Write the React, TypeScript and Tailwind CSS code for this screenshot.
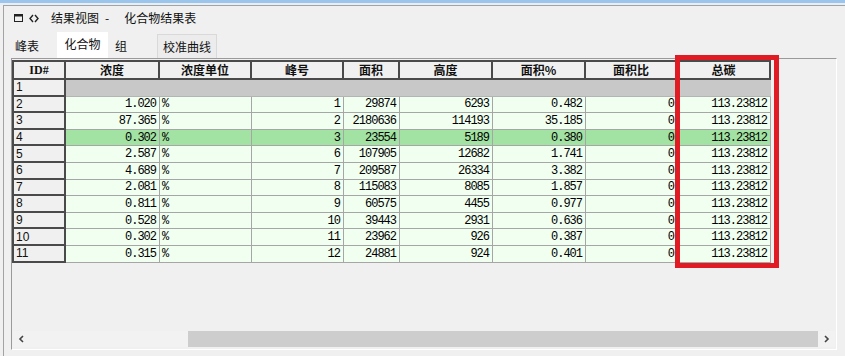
import React from 'react'

interface Column {
  label: string
  w: number
  align: 'left' | 'right' | 'center'
}

const columns: Column[] = [
  { label: 'ID#', w: 52, align: 'left' },
  { label: '浓度', w: 94, align: 'right' },
  { label: '浓度单位', w: 92, align: 'left' },
  { label: '峰号', w: 92, align: 'right' },
  { label: '面积', w: 56, align: 'right' },
  { label: '高度', w: 93, align: 'right' },
  { label: '面积%', w: 93, align: 'right' },
  { label: '面积比', w: 92, align: 'right' },
  { label: '总碳', w: 93, align: 'right' },
]

// id, 浓度, 峰号, 面积, 高度, 面积%
const rows: [string, string, string, string, string, string][] = [
  ['2', '1.020', '1', '29874', '6293', '0.482'],
  ['3', '87.365', '2', '2180636', '114193', '35.185'],
  ['4', '0.302', '3', '23554', '5189', '0.380'],
  ['5', '2.587', '6', '107905', '12682', '1.741'],
  ['6', '4.689', '7', '209587', '26334', '3.382'],
  ['7', '2.081', '8', '115083', '8085', '1.857'],
  ['8', '0.811', '9', '60575', '4455', '0.977'],
  ['9', '0.528', '10', '39443', '2931', '0.636'],
  ['10', '0.302', '11', '23962', '926', '0.387'],
  ['11', '0.315', '12', '24881', '924', '0.401'],
]

const cjk = "font-['Noto_Sans_CJK_SC','Noto_Sans',sans-serif]"
const num = "font-['Liberation_Mono',monospace] text-[12px] tracking-[-1px] text-black"

const IdCell: React.FC<{ children: React.ReactNode }> = ({ children }) => (
  <div className="w-[52px] h-full shrink-0 bg-[#f0f0f0] border-r-2 border-b-2 border-[#4a4a4a] pl-[2px] flex items-center text-[12px] font-['Liberation_Sans',sans-serif] text-[#111]">
    {children}
  </div>
)

const App: React.FC = () => {
  return (
    <div className={`w-[845px] h-[356px] bg-[#f0f0f0] relative overflow-hidden ${cjk} text-[#111]`}>
      <div className="h-[3px] bg-[#9cc5ec]" />
      <div className="h-[2px] bg-[#e6eef6]" />

      <div className="ml-[3px] h-[351px] border-l border-t border-[#a3a3a3]">
        {/* Title */}
        <div className="h-[24px] pl-[10px] flex items-center text-[12px] leading-none">
          <svg width="9" height="8" viewBox="0 0 9 8" className="mr-[6px]">
            <rect x="0.5" y="0.5" width="8" height="7" fill="none" stroke="#222" strokeWidth="1" />
            <rect x="0" y="0" width="9" height="2.5" fill="#222" />
          </svg>
          <svg width="10" height="9" viewBox="0 0 10 9" className="mr-[12px]">
            <polyline points="4,1 1,4.5 4,8" fill="none" stroke="#222" strokeWidth="1.4" />
            <polyline points="6,1 9,4.5 6,8" fill="none" stroke="#222" strokeWidth="1.4" />
          </svg>
          <span>结果视图</span>
          <span className="ml-[6px]">-</span>
          <span className="ml-[15px]">化合物结果表</span>
        </div>

        {/* Tabs */}
        <div className="h-[28px] pl-[6px] flex items-end text-[12px]">
          <div className="w-[47px] h-[24px] flex items-center pl-[5px]">峰表</div>
          <div className="w-[51px] h-[26px] bg-white flex items-center justify-center pb-[2px]">化合物</div>
          <div className="w-[49px] h-[24px] flex items-center pl-[7px]">组</div>
          <div className="w-[60px] h-[24px] border border-b-0 border-[#d9d9d9] bg-[#ececec] flex items-center justify-center">
            校准曲线
          </div>
        </div>

        {/* Panel */}
        <div className="ml-[7px] w-[826px] h-[292px] border-l border-t border-[#9a9a9a] border-r border-b border-r-white border-b-white flex flex-col">
          <div className="self-start border-l-2 border-t-2 border-[#4a4a4a] mt-[1px]">
            {/* Header */}
            <div className="flex h-[18px]">
              {columns.map((c) => (
                <div
                  key={c.label}
                  style={{ width: c.w }}
                  className={`shrink-0 h-full bg-[#f0f0f0] border-r-2 border-b-2 border-[#4a4a4a] flex items-center justify-center font-bold text-[12px] ${
                    c.label === 'ID#' ? "font-['Liberation_Serif',serif] text-[11px]" : ''
                  }`}
                >
                  {c.label}
                </div>
              ))}
            </div>

            {/* Row 1 */}
            <div className="flex h-[16.6px]">
              <IdCell>1</IdCell>
              <div className="w-[705px] h-full bg-[#c8c8c8] border-b border-[#b4b4b4]" />
            </div>

            {rows.map((r) => {
              const hl = r[0] === '4'
              const bg = hl ? 'bg-[#a2e2a2]' : 'bg-[#f0fff0]'
              const cells = [r[1], '%', r[2], r[3], r[4], r[5], '0', '113.23812']
              return (
                <div key={r[0]} className="flex h-[16.6px]">
                  <IdCell>{r[0]}</IdCell>
                  {cells.map((v, i) => {
                    const c = columns[i + 1]
                    return (
                      <div
                        key={i}
                        style={{ width: c.w }}
                        className={`shrink-0 h-full ${bg} border-r border-b border-[#a6a6a6] flex items-center ${num} ${
                          c.align === 'left' ? 'justify-start pl-[2px]' : 'justify-end pr-[3px]'
                        }`}
                      >
                        {v}
                      </div>
                    )
                  })}
                </div>
              )
            })}
          </div>

          <div className="flex-1" />

          {/* Horizontal scrollbar */}
          <div className="mx-[1px] mb-[2px] h-[16px] flex">
            <div className="w-[17px] h-full bg-[#f2f2f2] flex items-center justify-center">
              <svg width="7" height="8" viewBox="0 0 7 8">
                <polyline points="5,1 2,4 5,7" fill="none" stroke="#444" strokeWidth="1.6" />
              </svg>
            </div>
            <div className="w-[158px] h-full bg-[#f2f2f2]" />
            <div className="flex-1 h-full bg-[#cdcdcd]" />
            <div className="w-[17px] h-full bg-[#f2f2f2] flex items-center justify-center">
              <svg width="7" height="8" viewBox="0 0 7 8">
                <polyline points="2,1 5,4 2,7" fill="none" stroke="#444" strokeWidth="1.6" />
              </svg>
            </div>
          </div>
        </div>
      </div>

      {/* Red highlight box */}
      <div className="absolute left-[675px] top-[55px] w-[104px] h-[213px] border-[5px] border-[#e11b24]" />
    </div>
  )
}

export default App
